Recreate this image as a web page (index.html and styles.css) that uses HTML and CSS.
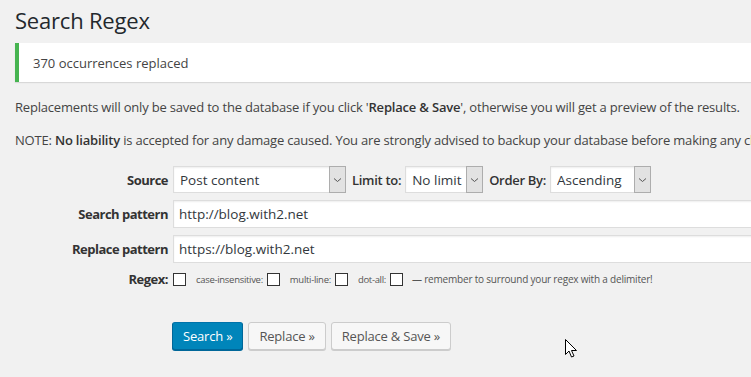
FILE: index.html
```html
<!DOCTYPE html>
<html lang="en">
<head>
    <meta charset="UTF-8">
    <meta name="viewport" content="width=device-width, initial-scale=1.0">
    <title>Search Regex</title>
    <link rel="stylesheet" href="styles.css">
</head>
<body>
    <div class="wrap">
        <h1 class="page-title">Search Regex</h1>

        <div class="notice">
            <p>370 occurrences replaced</p>
        </div>

        <p class="info">Replacements will only be saved to the database if you click '<strong>Replace &amp; Save</strong>', otherwise you will get a preview of the results.</p>
        <p class="info">NOTE: <strong>No liability</strong> is accepted for any damage caused. You are strongly advised to backup your database before making any changes.</p>

        <form class="search-form" onsubmit="return false">
            <div class="form-row">
                <label class="form-label">Source</label>
                <div class="form-field inline">
                    <div class="select select-source">
                        <select>
                            <option>Post content</option>
                        </select>
                        <span class="select-arrow"><svg width="9" height="6" viewBox="0 0 9 6"><path d="M1 1.5 L4.5 4.5 L8 1.5" fill="none" stroke="#555" stroke-width="1"/></svg></span>
                    </div>
                    <span class="inline-label">Limit to:</span>
                    <div class="select select-limit">
                        <select>
                            <option>No limit</option>
                        </select>
                        <span class="select-arrow"><svg width="9" height="6" viewBox="0 0 9 6"><path d="M1 1.5 L4.5 4.5 L8 1.5" fill="none" stroke="#555" stroke-width="1"/></svg></span>
                    </div>
                    <span class="inline-label">Order By:</span>
                    <div class="select select-order">
                        <select>
                            <option>Ascending</option>
                        </select>
                        <span class="select-arrow"><svg width="9" height="6" viewBox="0 0 9 6"><path d="M1 1.5 L4.5 4.5 L8 1.5" fill="none" stroke="#555" stroke-width="1"/></svg></span>
                    </div>
                </div>
            </div>

            <div class="form-row">
                <label class="form-label" for="searchPattern">Search pattern</label>
                <div class="form-field">
                    <input type="text" id="searchPattern" class="text-input" value="http://blog.with2.net">
                </div>
            </div>

            <div class="form-row">
                <label class="form-label" for="replacePattern">Replace pattern</label>
                <div class="form-field">
                    <input type="text" id="replacePattern" class="text-input" value="https://blog.with2.net">
                </div>
            </div>

            <div class="form-row regex-row">
                <label class="form-label">Regex:</label>
                <div class="form-field inline small">
                    <input type="checkbox" class="check">
                    <span class="check-label">case-insensitive:</span>
                    <input type="checkbox" class="check">
                    <span class="check-label">multi-line:</span>
                    <input type="checkbox" class="check">
                    <span class="check-label">dot-all:</span>
                    <input type="checkbox" class="check">
                    <span class="check-label note">&mdash; remember to surround your regex with a delimiter!</span>
                </div>
            </div>

            <div class="actions">
                <button type="submit" class="btn btn-primary">Search &raquo;</button>
                <button type="submit" class="btn">Replace &raquo;</button>
                <button type="submit" class="btn">Replace &amp; Save &raquo;</button>
            </div>
        </form>
    </div>

    <svg class="cursor" width="13" height="20" viewBox="0 0 13 20">
        <path d="M0.5 0.5 L0.5 15.5 L4 12 L6.5 18 L9 17 L6.5 11.5 L11.5 11.5 Z" fill="#fff" stroke="#000" stroke-width="1" stroke-linejoin="miter"/>
    </svg>
</body>
</html>
```

FILE: styles.css
```css
:root {
    --bg: #f1f1f1;
    --text: #444;
    --title: #23282d;
    --border: #ddd;
    --green: #46b450;
    --blue: #0085ba;
}

* {
    margin: 0;
    padding: 0;
    box-sizing: border-box;
}

html, body {
    background: var(--bg);
    overflow: hidden;
}

body {
    font-family: 'Open Sans', 'Noto Sans', sans-serif;
    color: var(--text);
    font-size: 13px;
    width: 751px;
    height: 377px;
    position: relative;
}

.wrap {
    padding: 0 0 0 15px;
}

.page-title {
    font-size: 22px;
    font-weight: 400;
    color: var(--title);
    line-height: 29px;
    padding-top: 6px;
    letter-spacing: -0.2px;
}

.notice {
    margin-top: 8px;
    background: #fff;
    border-left: 4px solid var(--green);
    box-shadow: 0 1px 1px rgba(0, 0, 0, 0.1);
    height: 39px;
    display: flex;
    align-items: center;
    padding-left: 14px;
}

.notice p {
    font-size: 13px;
    color: #444;
}

/* the second note runs past the window edge, as on the original page */
.info {
    font-size: 13px;
    letter-spacing: -0.19px;
    line-height: 18px;
    margin-top: 16px;
    white-space: nowrap;
}

.info + .info {
    margin-top: 15px;
}

.info strong {
    font-weight: 600;
    color: #333;
}

.search-form {
    margin-top: 17px;
}

.form-row {
    display: grid;
    grid-template-columns: 153px 1fr;
    column-gap: 5px;
    align-items: center;
    margin-bottom: 7px;
}

.form-label {
    text-align: right;
    font-weight: 700;
    font-size: 13px;
    letter-spacing: -0.5px;
    color: #333;
}

.form-field {
    min-width: 0;
}

.form-field.inline {
    display: flex;
    align-items: center;
    white-space: nowrap;
}

.select {
    display: flex;
    height: 27px;
    background: #fff;
    border: 1px solid var(--border);
    box-shadow: inset 0 1px 2px rgba(0, 0, 0, 0.07);
}

.select select {
    appearance: none;
    -webkit-appearance: none;
    border: none;
    background: transparent;
    font-family: 'Open Sans', 'Noto Sans', sans-serif;
    font-size: 13.5px;
    color: #32373c;
    padding-left: 6px;
    flex: 1;
    min-width: 0;
    outline: none;
}

.select-arrow {
    width: 17px;
    display: flex;
    align-items: center;
    justify-content: center;
    background: #e2e2e2;
    border: 1px solid #adadad;
    margin: -1px -1px -1px 0;
}

.select-source {
    width: 173px;
}

.select-limit {
    width: 78px;
}

.select-order {
    width: 101px;
}

.inline-label {
    font-size: 13px;
    font-weight: 600;
    color: #333;
    margin: 0 4px 0 6px;
    letter-spacing: -0.3px;
}

.text-input {
    width: 700px;
    height: 28px;
    border: 1px solid var(--border);
    box-shadow: inset 0 1px 2px rgba(0, 0, 0, 0.07);
    background: #fff;
    font-family: 'Open Sans', 'Noto Sans', sans-serif;
    font-size: 13.5px;
    color: #32373c;
    padding: 0 5px;
    outline: none;
}

.regex-row {
    margin-top: 4px;
}

.check {
    appearance: none;
    -webkit-appearance: none;
    width: 13px;
    height: 13px;
    border: 1px solid #333;
    background: #fff;
    flex: none;
}

.check-label {
    font-size: 9.5px;
    color: #555;
    margin: 0 4px 0 10px;
    letter-spacing: -0.3px;
}

.check-label.note {
    margin-left: 9px;
    font-size: 10px;
    letter-spacing: -0.2px;
}

.actions {
    display: flex;
    gap: 5px;
    margin: 34px 0 0 157px;
}

.btn {
    height: 28px;
    padding: 0 10px;
    font-family: 'Open Sans', 'Noto Sans', sans-serif;
    font-size: 13px;
    color: #555;
    background: #f7f7f7;
    border: 1px solid #ccc;
    border-radius: 3px;
    box-shadow: 0 1px 0 #ccc;
    cursor: pointer;
    letter-spacing: -0.2px;
}

.btn-primary {
    background: var(--blue);
    border-color: #0073aa #006799 #006799;
    box-shadow: 0 1px 0 #006799;
    color: #fff;
}

.cursor {
    position: absolute;
    left: 565px;
    top: 339px;
}
```
